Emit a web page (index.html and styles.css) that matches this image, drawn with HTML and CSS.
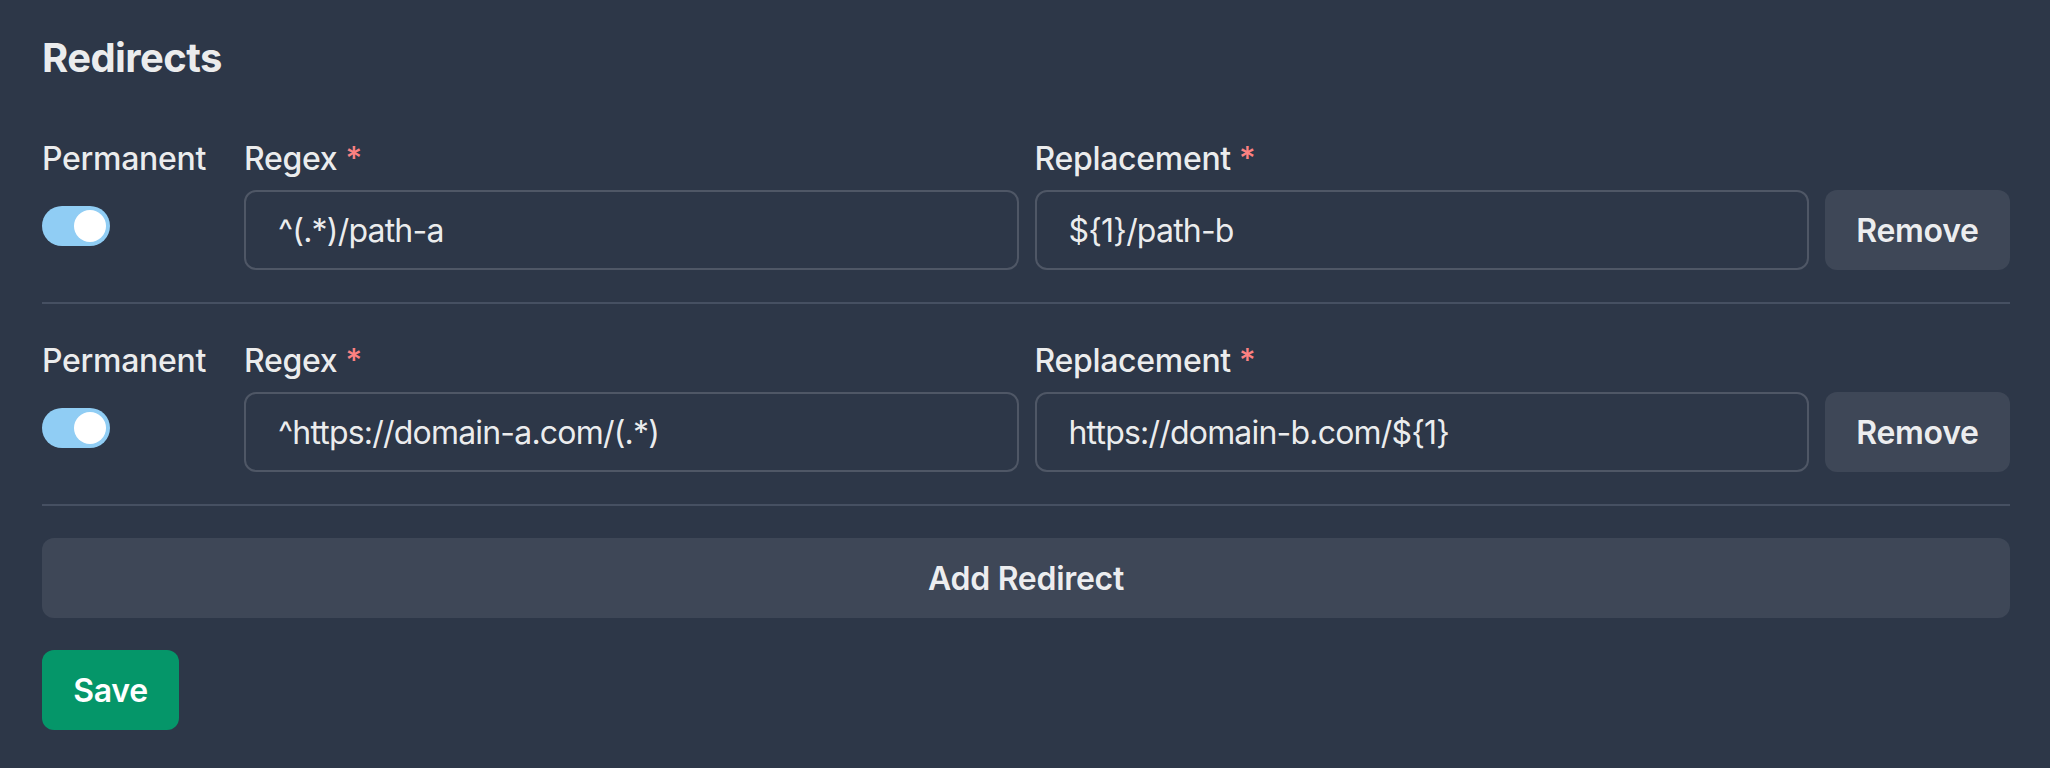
FILE: index.html
```html
<!DOCTYPE html>
<html lang="en">
<head>
<meta charset="utf-8">
<title>Redirects</title>
<link rel="stylesheet" href="styles.css">
</head>
<body>
<div class="page">
  <h2 class="title">Redirects</h2>
  <div class="list">
    <div class="row">
      <div class="field perm">
        <label class="label">Permanent</label>
        <div class="switch-wrap"><span class="switch on"><span class="knob"></span></span></div>
      </div>
      <div class="field grow">
        <label class="label">Regex<span class="req">*</span></label>
        <input class="input" type="text" value="^(.*)/path-a">
      </div>
      <div class="field grow">
        <label class="label">Replacement<span class="req">*</span></label>
        <input class="input" type="text" value="${1}/path-b">
      </div>
      <button class="btn remove">Remove</button>
    </div>
    <div class="divider"></div>
    <div class="row">
      <div class="field perm">
        <label class="label">Permanent</label>
        <div class="switch-wrap"><span class="switch on"><span class="knob"></span></span></div>
      </div>
      <div class="field grow">
        <label class="label">Regex<span class="req">*</span></label>
        <input class="input" type="text" value="^https://domain-a.com/(.*)">
      </div>
      <div class="field grow">
        <label class="label">Replacement<span class="req">*</span></label>
        <input class="input" type="text" value="https://domain-b.com/${1}">
      </div>
      <button class="btn remove">Remove</button>
    </div>
    <div class="divider"></div>
    <button class="btn add">Add Redirect</button>
    <div class="actions">
      <button class="btn save">Save</button>
    </div>
  </div>
</div>
</body>
</html>
```
FILE: styles.css
```css
* { box-sizing: border-box; }
html, body {
  margin: 0;
  padding: 0;
  background: #2d3748;
}
body {
  font-family: Inter, "Noto Sans", "Liberation Sans", sans-serif;
  color: rgba(255, 255, 255, 0.92);
  height: 768px;
  overflow: hidden;
}
.page {
  padding: 34px 40px 0 42px;
}
.title {
  margin: 0 0 52px 0;
  font-size: 40px;
  line-height: 48px;
  font-weight: 700;
  letter-spacing: -0.6px;
}
.list {
  display: flex;
  flex-direction: column;
  gap: 32px;
}
.row {
  display: flex;
  align-items: flex-end;
  gap: 16px;
}
.field {
  display: flex;
  flex-direction: column;
}
.perm { width: 186px; flex: none; }
.grow { flex: 1 1 0; min-width: 0; }
.label {
  font-size: 32px;
  line-height: 46px;
  padding-top: 2px;
  font-weight: 500;
  margin-bottom: 8px;
  letter-spacing: -0.3px;
}
.req {
  color: #fc8181;
  margin-left: 8px;
}
.switch-wrap {
  height: 80px;
  padding-top: 16px;
}
.switch {
  display: flex;
  justify-content: flex-end;
  width: 68px;
  height: 40px;
  padding: 4px;
  border-radius: 20px;
  background: #90cdf4;
}
.knob {
  width: 32px;
  height: 32px;
  border-radius: 50%;
  background: #ffffff;
}
.input {
  height: 80px;
  width: 100%;
  border: 2px solid #4f5766;
  border-radius: 12px;
  background: transparent;
  padding: 0 32px;
  font-family: inherit;
  font-size: 32px;
  color: rgba(255, 255, 255, 0.92);
  outline: none;
  letter-spacing: -0.8px;
}
.btn {
  font-family: inherit;
  font-size: 32px;
  font-weight: 600;
  height: 80px;
  border: none;
  border-radius: 12px;
  padding: 0 32px;
  color: rgba(255, 255, 255, 0.92);
  background: #3e4757;
  cursor: pointer;
  letter-spacing: -0.3px;
}
.remove { flex: none; width: 185px; padding: 0; }
.add { width: 100%; }
.divider {
  height: 2px;
  background: #465062;
}
.actions { display: flex; }
.save {
  background: #059669;
  color: #ffffff;
  width: 137px;
  padding: 0;
}
```
